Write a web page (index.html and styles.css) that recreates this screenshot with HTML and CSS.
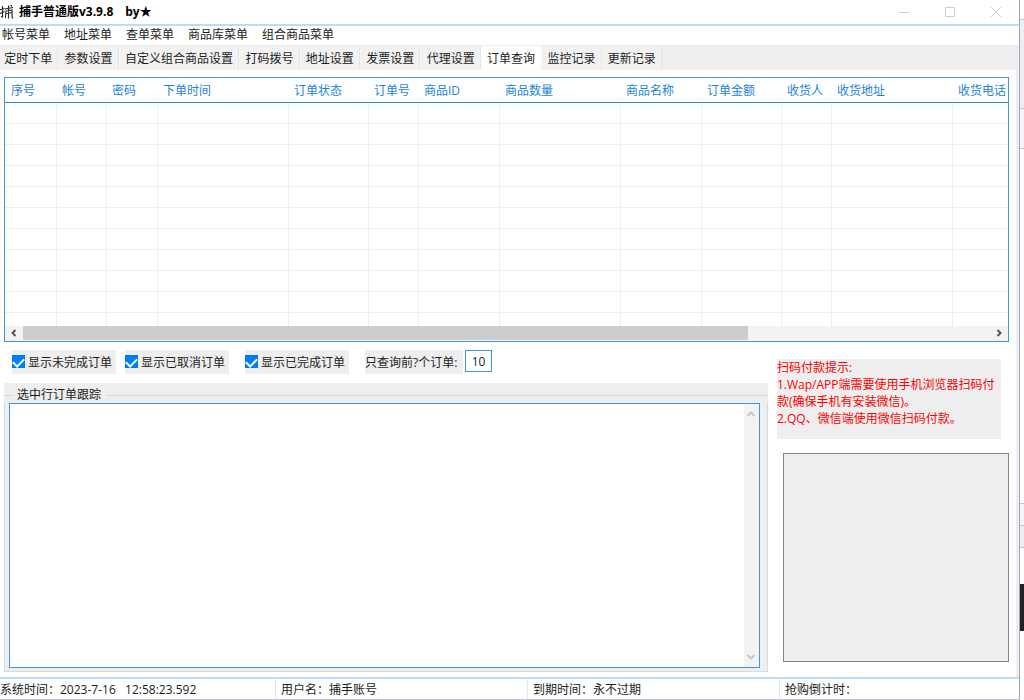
FILE: index.html
```html
<!DOCTYPE html>
<html lang="zh-CN">
<head>
<meta charset="utf-8">
<title>捕手普通版v3.9.8</title>
<link rel="stylesheet" href="styles.css">
</head>
<body>
<div class="window">
  <header class="titlebar">
    <svg class="logo" width="14" height="14" viewBox="0 0 14 14" fill="none" stroke="#222" stroke-width="1.100"><path d="M0 4.500L4.500 3.500M2.500 1V12L1 11.500M0 8.500L4.500 6.500M5 4L13 2.500M8.500 .5V13.500M6 5.500L5.500 13M6 6L12 5V11.500Q12 13.500 13 12.500M6 8.500L12 7.500M10.500 0L12 1.500"/></svg>
    <h1 class="title">捕手普通版v3.9.8</h1>
    <span class="title">by★</span>
    <div class="window-buttons">
      <button class="window-button" aria-label="最小化"><svg width="12" height="12" viewBox="0 0 12 12"><path d="M1 6.500H11"/></svg></button>
      <button class="window-button" aria-label="最大化"><svg width="12" height="12" viewBox="0 0 12 12"><path d="M1.500 1.500H10.500V10.500H1.500Z"/></svg></button>
      <button class="window-button" aria-label="关闭"><svg width="12" height="12" viewBox="0 0 12 12"><path d="M1 1L11 11M11 1L1 11"/></svg></button>
    </div>
  </header>
  <nav class="menubar">
    <button class="menu">帐号菜单</button>
    <button class="menu">地址菜单</button>
    <button class="menu">查单菜单</button>
    <button class="menu">商品库菜单</button>
    <button class="menu">组合商品菜单</button>
  </nav>
  <div class="tabstrip">
    <div class="tabs" role="tablist">
      <button class="tab" role="tab">定时下单</button>
      <button class="tab" role="tab">参数设置</button>
      <button class="tab" role="tab">自定义组合商品设置</button>
      <button class="tab" role="tab">打码拨号</button>
      <button class="tab" role="tab">地址设置</button>
      <button class="tab" role="tab">发票设置</button>
      <button class="tab" role="tab">代理设置</button>
      <button class="tab selected" role="tab" aria-selected="true">订单查询</button>
      <button class="tab" role="tab">监控记录</button>
      <button class="tab" role="tab">更新记录</button>
    </div>
  </div>
  <main class="page">
    <section class="orders">
      <div class="orders-view">
        <table class="orders-table">
          <colgroup><col class="w51"><col class="w50"><col class="w51"><col class="w131"><col class="w80"><col class="w50"><col class="w81"><col class="w121"><col class="w81"><col class="w80"><col class="w50"><col class="w121"><col></colgroup>
          <thead>
            <tr><th>序号</th><th>帐号</th><th>密码</th><th>下单时间</th><th>订单状态</th><th>订单号</th><th>商品ID</th><th>商品数量</th><th>商品名称</th><th>订单金额</th><th>收货人</th><th>收货地址</th><th>收货电话</th></tr>
          </thead>
          <tbody>
            <tr><td></td><td></td><td></td><td></td><td></td><td></td><td></td><td></td><td></td><td></td><td></td><td></td><td></td></tr>
            <tr><td></td><td></td><td></td><td></td><td></td><td></td><td></td><td></td><td></td><td></td><td></td><td></td><td></td></tr>
            <tr><td></td><td></td><td></td><td></td><td></td><td></td><td></td><td></td><td></td><td></td><td></td><td></td><td></td></tr>
            <tr><td></td><td></td><td></td><td></td><td></td><td></td><td></td><td></td><td></td><td></td><td></td><td></td><td></td></tr>
            <tr><td></td><td></td><td></td><td></td><td></td><td></td><td></td><td></td><td></td><td></td><td></td><td></td><td></td></tr>
            <tr><td></td><td></td><td></td><td></td><td></td><td></td><td></td><td></td><td></td><td></td><td></td><td></td><td></td></tr>
            <tr><td></td><td></td><td></td><td></td><td></td><td></td><td></td><td></td><td></td><td></td><td></td><td></td><td></td></tr>
            <tr><td></td><td></td><td></td><td></td><td></td><td></td><td></td><td></td><td></td><td></td><td></td><td></td><td></td></tr>
            <tr><td></td><td></td><td></td><td></td><td></td><td></td><td></td><td></td><td></td><td></td><td></td><td></td><td></td></tr>
            <tr><td></td><td></td><td></td><td></td><td></td><td></td><td></td><td></td><td></td><td></td><td></td><td></td><td></td></tr>
            <tr><td></td><td></td><td></td><td></td><td></td><td></td><td></td><td></td><td></td><td></td><td></td><td></td><td></td></tr>
          </tbody>
        </table>
      </div>
      <div class="hscroll">
        <button class="scroll-button" aria-label="向左滚动"><svg width="8" height="8" viewBox="0 0 8 8"><path d="M5.500 1L2.500 4L5.500 7"/></svg></button>
        <div class="htrack"><div class="hthumb"></div></div>
        <button class="scroll-button" aria-label="向右滚动"><svg width="8" height="8" viewBox="0 0 8 8"><path d="M2.500 1L5.500 4L2.500 7"/></svg></button>
      </div>
    </section>
    <div class="lower">
      <div class="left">
        <div class="filters">
          <label class="check"><input type="checkbox" checked>显示未完成订单</label>
          <label class="check wide"><input type="checkbox" checked>显示已取消订单</label>
          <label class="check wide"><input type="checkbox" checked>显示已完成订单</label>
          <label class="limit-label" for="limit">只查询前?个订单:</label>
          <input class="limit" id="limit" type="text" value="10">
        </div>
        <section class="group">
          <div class="legend"><label for="trace">选中行订单跟踪</label></div>
          <div class="group-body">
            <div class="trace-box">
              <textarea class="trace" id="trace"></textarea>
              <div class="vscroll">
                <button class="scroll-button faint" aria-label="向上滚动"><svg width="10" height="8" viewBox="0 0 10 8"><path d="M1.500 6L5 2.500L8.500 6"/></svg></button>
                <button class="scroll-button faint" aria-label="向下滚动"><svg width="10" height="8" viewBox="0 0 10 8"><path d="M1.500 2L5 5.500L8.500 2"/></svg></button>
              </div>
            </div>
          </div>
        </section>
      </div>
      <aside class="right">
        <div class="tips">扫码付款提示:<br>1.Wap/APP端需要使用手机浏览器扫码付款(确保手机有安装微信)。<br>2.QQ、微信端使用微信扫码付款。</div>
        <div class="qr"></div>
      </aside>
    </div>
  </main>
  <footer class="status">
    <div class="cell">系统时间：2023-7-16&nbsp;&nbsp; 12:58:23.592</div>
    <div class="cell">用户名：捕手账号</div>
    <div class="cell">到期时间：永不过期</div>
    <div class="cell">抢购倒计时：</div>
  </footer>
</div>
<div class="behind">
  <div class="sheet top"></div>
  <div class="sheet grey"></div>
  <div class="sheet pale"></div>
  <div class="sheet fill"></div>
  <div class="sheet pale short"></div>
  <div class="sheet grey short"></div>
  <div class="sheet gap"></div>
  <div class="sheet dark"></div>
  <div class="sheet end"></div>
</div>
</body>
</html>
```
FILE: styles.css
```css
* { box-sizing: border-box; }
body {
  display: flex;
  height: 100vh;
  margin: 0;
  overflow: hidden;
  background: #fff;
  color: #1c1c1c;
  font: 12px/16px "Open Sans", "Noto Sans CJK SC", sans-serif;
}
button, input, textarea { margin: 0; padding: 0; border: 0; background: none; color: inherit; font: inherit; }
svg { display: block; }

.window {
  display: flex;
  flex: 1;
  flex-direction: column;
  min-width: 0;
  overflow: hidden;
  border-right: 1px solid #a3a0cb;
  border-bottom: 1px solid #c3c1e0;
}
.titlebar { display: flex; align-items: center; height: 24px; flex: none; }
.logo { margin-right: 5px; }
.title { margin: 0 12px 0 0; color: #000; font-size: 12px; font-weight: bold; }
.window-buttons { display: flex; margin-left: auto; }
.window-button { display: flex; align-items: center; justify-content: center; width: 46px; height: 24px; }
.window-button svg { fill: none; stroke: #cfcfcf; }

.menubar {
  display: flex;
  flex: none;
  gap: 14px;
  height: 21px;
  padding: 1px 0 0 2px;
  border-top: 2px solid #b9dcfb;
}
.menu { height: 16px; white-space: nowrap; }

.tabstrip { flex: none; height: 25px; padding-top: 1px; background: #eee; }
.tabs { display: flex; width: 664px; height: 24px; margin-left: -2px; }
.tab {
  flex: 1 1 auto;
  margin-top: 1px;
  padding: 0 5px;
  border-right: 1px solid #e4e4e4;
  border-left: 1px solid #f6f6f6;
  background: #f2f2f2;
  white-space: nowrap;
}
.tab.selected { margin-top: 0; padding-top: 1px; border-color: #fff; background: #fff; }

.page {
  display: flex;
  flex: 1;
  flex-direction: column;
  min-height: 0;
  padding: 7px 7px 5px 4px;
  border-right: 3px solid #eee;
}
.orders { display: flex; flex: 264; flex-direction: column; min-height: 0; border: 1px solid #3e97dc; }
.orders-view { flex: 1; min-height: 0; overflow: hidden; }
.orders-table { width: 100%; border-collapse: separate; border-spacing: 0; table-layout: fixed; }
.orders-table th {
  height: 25px;
  padding: 2px 0 0 6px;
  border-bottom: 1px solid #2588d8;
  color: #1d83d8;
  font-weight: normal;
  text-align: left;
  white-space: nowrap;
}
.orders-table td { height: 21px; padding: 0; border-bottom: 1px solid #eee; border-left: 1px solid #eee; }
.orders-table td:first-child { border-left: 0; }
.w50 { width: 50px; }
.w51 { width: 51px; }
.w80 { width: 80px; }
.w81 { width: 81px; }
.w121 { width: 121px; }
.w131 { width: 131px; }

.hscroll { display: flex; flex: none; height: 15px; background: #f3f3f3; }
.htrack { flex: 1; }
.hthumb { width: 75%; height: 14px; background: #cdcdcd; }
.scroll-button { display: flex; align-items: center; justify-content: center; width: 18px; height: 14px; }
.scroll-button svg { fill: none; stroke: #555; stroke-width: 2; }
.scroll-button.faint { width: 14px; height: 20px; }
.scroll-button.faint svg { stroke: #c6c6c6; }

.lower { display: flex; flex: 331; gap: 9px; min-height: 0; }
.left { display: flex; flex: 1; flex-direction: column; min-width: 0; }
.filters { display: flex; flex: none; height: 41px; padding: 8px 0 0 8px; }
.check, .limit-label { display: flex; align-items: center; height: 24px; padding-top: 1px; background: #eee; white-space: nowrap; }
.check { width: 104px; margin-right: 9px; }
.check.wide { margin-right: 16px; }
.check input {
  display: flex;
  justify-content: center;
  width: 13px;
  height: 13px;
  margin: 0 3px 2px 0;
  border: 1px solid #0078f0;
  appearance: none;
}
.check input:checked { background: #0080f8; }
.check input:checked::before {
  width: 5px;
  height: 9px;
  border: solid #fff;
  border-width: 0 2px 2px 0;
  content: "";
  transform: rotate(45deg);
}
.limit-label { width: 98px; margin-right: 2px; }
.limit { width: 27px; height: 22px; border: 1px solid #3e97dc; text-align: center; }

.group { display: flex; flex: 1; flex-direction: column; min-height: 0; background: #eee; }
.legend { display: flex; flex: none; height: 20px; align-items: center; gap: 5px; padding-top: 4px; }
.legend::before, .legend::after { height: 1px; background: #d8d8d8; content: ""; }
.legend::before { width: 8px; }
.legend::after { flex: 1; }
.group-body { flex: 1; min-height: 0; padding: 0 7px 3px 4px; border: 1px solid #dadada; border-top: 0; }
.trace-box { display: flex; height: 100%; border: 1px solid #3e97dc; background: #fff; }
.trace { flex: 1; min-width: 0; resize: none; outline: 0; }
.vscroll { display: flex; flex-direction: column; justify-content: space-between; width: 15px; background: #f3f3f3; }

.right { display: flex; flex: none; flex-direction: column; width: 232px; padding: 17px 0 10px; }
.tips { flex: none; height: 80px; margin: 0 8px 14px 0; background: #eee; color: #f00; line-height: 17px; }
.qr { flex: 1; margin-left: 6px; border: 1px solid #848484; background: #eee; }

.status { display: grid; flex: none; grid-template-columns: 275px 252px 252px 1fr; height: 22px; border-top: 2px solid #b9dcfb; }
.cell { padding: 3px 0 0 5px; border-left: 1px solid #d9ecfc; white-space: nowrap; }
.cell:first-child { padding-left: 0; border-left: 0; }

.behind { display: flex; flex: none; flex-direction: column; width: 4px; }
.sheet { flex: none; border-bottom: 1px solid #c4c4c4; }
.top { height: 20px; }
.grey { height: 89px; background: #eee; }
.pale { height: 40px; background: #f6f6f6; }
.fill { height: 355px; }
.short { height: 22px; }
.gap { height: 36px; border-bottom: 0; }
.dark { height: 47px; border-bottom: 0; background: #222; }
.end { flex: 1; border-bottom: 0; }
```
